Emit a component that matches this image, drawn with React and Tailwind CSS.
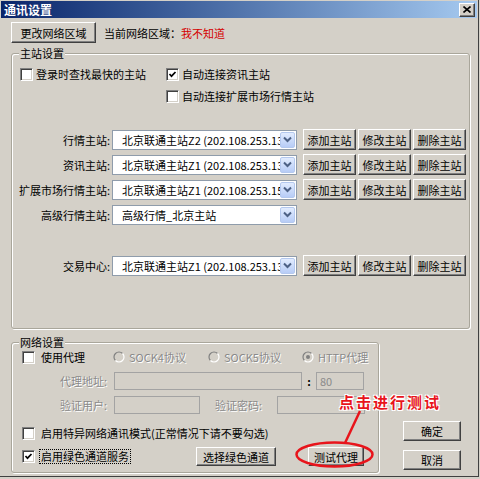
import React from "react";

function Btn({ w, h = "h-[21px]", className = "", children }) {
  return (
    <div
      className={`flex shrink-0 items-center justify-center bg-[#d4d0c8] border border-t-white border-l-white border-r-[#404040] border-b-[#404040] shadow-[inset_-1px_-1px_0_#808080] ${w} ${h} ${className}`}
    >
      {children}
    </div>
  );
}

function Check({ checked }) {
  return (
    <div className="flex w-[13px] h-[13px] shrink-0 items-center justify-center bg-white border border-t-[#808080] border-l-[#808080] border-b-white border-r-white shadow-[inset_1px_1px_0_#404040,inset_-1px_-1px_0_#d4d0c8]">
      {checked && (
        <svg width="9" height="9" viewBox="0 0 9 9">
          <path d="M1.5 4 L3.5 6.2 L7.5 2" stroke="#000" strokeWidth="1.7" fill="none" />
        </svg>
      )}
    </div>
  );
}

function Radio({ checked }) {
  return (
    <svg width="12" height="12" viewBox="0 0 12 12" className="shrink-0">
      <circle cx="6" cy="6" r="5" fill="#d4d0c8" />
      <path d="M2.46 9.54 A5 5 0 0 1 9.54 2.46" stroke="#808080" strokeWidth="1.2" fill="none" />
      <path d="M9.54 2.46 A5 5 0 0 1 2.46 9.54" stroke="#ffffff" strokeWidth="1.2" fill="none" />
      {checked && <circle cx="6" cy="6" r="2" fill="#808080" />}
    </svg>
  );
}

function Combo({ text }) {
  return (
    <div className="flex w-[185px] h-[20px] ml-[2px] shrink-0 items-center bg-white border border-[#8f9cab]">
      <div className="flex-1 overflow-hidden whitespace-nowrap pl-[9px]">{text}</div>
      <div className="flex w-[15px] h-[16px] mr-[1px] items-center justify-center rounded-[2px] border border-[#b4c8ee] bg-linear-to-b from-[#e2ecfe] to-[#b7ccf6]">
        <svg width="9" height="7" viewBox="0 0 9 7">
          <path d="M1 1.5 L4.5 5 L8 1.5" stroke="#4d6185" strokeWidth="2" fill="none" />
        </svg>
      </div>
    </div>
  );
}

function GroupBox({ title, className, children }) {
  return (
    <div
      className={`relative shrink-0 rounded-[3px] border border-[#a9a69b] shadow-[inset_1px_1px_0_#fff,1px_1px_0_#fff] ${className}`}
    >
      <span className="absolute -top-[8px] left-[7px] bg-[#d4d0c8] px-[1px]">{title}</span>
      {children}
    </div>
  );
}

const disabledText = "text-[#8a8a8a] [text-shadow:1px_1px_0_#fff]";

const stations = [
  { label: "行情主站:", text: "北京联通主站Z2 (202.108.253.130:7709)", buttons: true },
  { label: "资讯主站:", text: "北京联通主站Z1 (202.108.253.131:7721)", buttons: true },
  { label: "扩展市场行情主站:", text: "北京联通主站Z1 (202.108.253.158:7727)", buttons: true },
  { label: "高级行情主站:", text: "高级行情_北京主站", buttons: false },
];

function StationRow({ label, text, buttons, className = "" }) {
  return (
    <div className={`flex h-[21px] items-center ${className}`}>
      <div className="w-[98px] shrink-0 text-right whitespace-nowrap">{label}</div>
      <Combo text={text} />
      {buttons && (
        <div className="flex ml-[6px] gap-[2px]">
          <Btn w="w-[53px]">添加主站</Btn>
          <Btn w="w-[53px]">修改主站</Btn>
          <Btn w="w-[53px]">删除主站</Btn>
        </div>
      )}
    </div>
  );
}

export default function App() {
  return (
    <div className="relative w-[480px] h-[479px] overflow-hidden bg-[#d4d0c8] text-[11px] leading-[14px] text-black font-['Noto_Sans_CJK_SC',sans-serif]">
      <div className="flex flex-col w-[479px] h-[477px] pt-[1px] pl-[1px] pr-[1px] border-r border-b border-[#404040]">
        {/* title bar */}
        <div className="flex h-[17px] shrink-0 items-center justify-between bg-linear-to-r from-[#0a246a] to-[#a6caf0] pl-[3px]">
          <span className="text-[12px] font-bold text-white">通讯设置</span>
          <div className="flex w-[16px] h-[14px] mr-[2px] items-center justify-center bg-[#d4d0c8] border border-t-white border-l-white border-r-[#404040] border-b-[#404040] shadow-[inset_-1px_-1px_0_#808080]">
            <svg width="8" height="7" viewBox="0 0 8 7">
              <path d="M0.5 0.5 L7.5 6.5 M7.5 0.5 L0.5 6.5" stroke="#000" strokeWidth="1.6" />
            </svg>
          </div>
        </div>

        <div className="flex flex-col pl-[10px] pt-[4px]">
          <div className="flex h-[21px] items-center">
            <Btn w="w-[85px]">更改网络区域</Btn>
            <span className="ml-[8px]">当前网络区域：</span>
            <span className="text-[#d40000]">我不知道</span>
          </div>

          <GroupBox title="主站设置" className="mt-[10px] w-[459px] h-[276px]">
            <div className="flex flex-col pt-[13px]">
              <div className="flex h-[14px] items-center pl-[8px]">
                <div className="flex w-[146px] items-center">
                  <Check />
                  <span className="ml-[3px]">登录时查找最快的主站</span>
                </div>
                <Check checked />
                <span className="ml-[3px]">自动连接资讯主站</span>
              </div>
              <div className="flex h-[14px] mt-[8px] items-center pl-[154px]">
                <Check />
                <span className="ml-[3px]">自动连接扩展市场行情主站</span>
              </div>
              <div className="flex flex-col mt-[26px] gap-[4px]">
                {stations.map((s) => (
                  <StationRow key={s.label} {...s} />
                ))}
              </div>
              <StationRow
                className="mt-[30px]"
                label="交易中心:"
                text="北京联通主站Z1 (202.108.253.130:7708)"
                buttons
              />
            </div>
          </GroupBox>

          <div className="flex mt-[13px]">
            <GroupBox title="网络设置" className="w-[368px] h-[131px]">
              <div className="flex flex-col pt-[7px] pl-[10px]">
                <div className="flex h-[14px] items-center">
                  <div className="flex w-[91px] items-center">
                    <Check />
                    <span className="ml-[6px]">使用代理</span>
                  </div>
                  <div className="flex w-[95px] items-center">
                    <Radio />
                    <span className={`ml-[4px] ${disabledText}`}>SOCK4协议</span>
                  </div>
                  <div className="flex w-[94px] items-center">
                    <Radio />
                    <span className={`ml-[4px] ${disabledText}`}>SOCK5协议</span>
                  </div>
                  <div className="flex items-center">
                    <Radio checked />
                    <span className={`ml-[4px] ${disabledText}`}>HTTP代理</span>
                  </div>
                </div>

                <div className="flex h-[18px] mt-[8px] items-center">
                  <div className={`w-[85px] text-right ${disabledText}`}>代理地址:</div>
                  <div className="w-[188px] h-[18px] ml-[7px] border border-[#a3a3a3]" />
                  <div className="w-[14px] text-center font-bold">:</div>
                  <div className="flex w-[48px] h-[18px] items-center border border-[#a3a3a3] pl-[3px] text-[#8a8a8a]">80</div>
                </div>

                <div className="flex h-[18px] mt-[6px] items-center">
                  <div className={`w-[85px] text-right ${disabledText}`}>验证用户:</div>
                  <div className="w-[86px] h-[18px] ml-[7px] border border-[#a3a3a3]" />
                  <div className={`w-[62px] ml-[15px] ${disabledText}`}>验证密码:</div>
                  <div className="w-[88px] h-[18px] border border-[#a3a3a3]" />
                </div>

                <div className="flex h-[14px] mt-[12px] items-center">
                  <Check />
                  <span className="ml-[6px]">启用特异网络通讯模式(正常情况下请不要勾选)</span>
                </div>

                <div className="flex h-[19px] mt-[7px] items-center">
                  <div className="flex w-[174px] items-center">
                    <Check checked />
                    <span className="ml-[4px] border border-dotted border-black px-[1px] leading-[13px]">启用绿色通道服务</span>
                  </div>
                  <Btn w="w-[80px]" h="h-[19px]">选择绿色通道</Btn>
                  <Btn w="w-[56px]" h="h-[19px]" className="ml-[32px]">测试代理</Btn>
                </div>
              </div>
            </GroupBox>

            <div className="flex flex-col justify-end ml-[24px] pb-[3px] gap-[9px]">
              <Btn w="w-[58px]" h="h-[20px]">确定</Btn>
              <Btn w="w-[58px]" h="h-[20px]">取消</Btn>
            </div>
          </div>
        </div>
      </div>

      {/* annotation overlay */}
      <div className="absolute left-[339px] top-[393px] text-[15px] leading-[18px] font-bold tracking-[2px] text-[#e8141b] [text-shadow:1px_1px_0_#fff,-1px_-1px_0_#fff,1px_-1px_0_#fff,-1px_1px_0_#fff]">
        点击进行测试
      </div>
      <svg className="absolute left-[290px] top-[405px]" width="90" height="68" viewBox="0 0 90 68">
        <path d="M70 6 L55 38" stroke="#e8141b" strokeWidth="2.5" fill="none" />
        <ellipse cx="44.5" cy="49.5" rx="38" ry="12" stroke="#e8141b" strokeWidth="2.5" fill="none" />
      </svg>
    </div>
  );
}
